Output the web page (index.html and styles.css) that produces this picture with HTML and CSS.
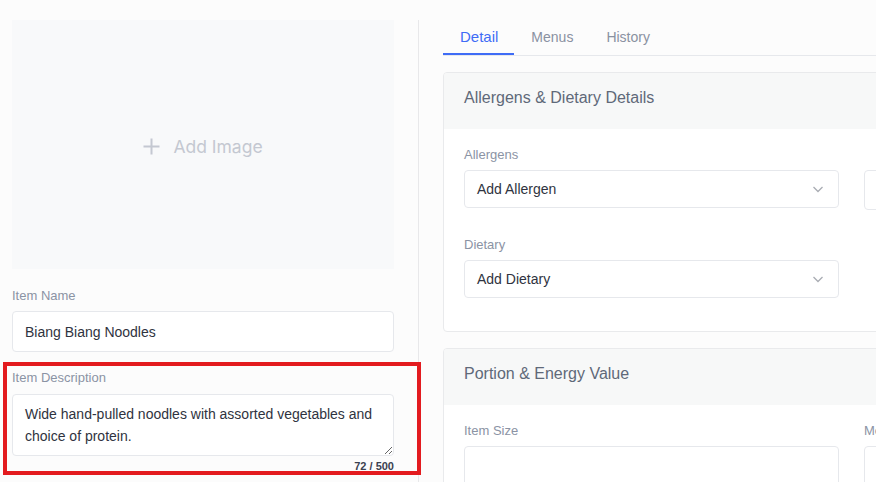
FILE: index.html
```html
<!DOCTYPE html>
<html lang="en">
<head>
<meta charset="utf-8">
<title>Item Detail</title>
<link rel="stylesheet" href="styles.css">
</head>
<body>
<div class="page">
  <aside class="left">
    <div class="image-box">
      <svg class="plus" width="17" height="17" viewBox="0 0 17 17"><path d="M8.5 0.5v16M0.5 8.5h16" stroke="#c4c8d1" stroke-width="2" fill="none"/></svg>
      <span class="add-image">Add Image</span>
    </div>

    <div class="field name-field">
      <label class="label">Item Name</label>
      <div class="input">Biang Biang Noodles</div>
    </div>

    <div class="field desc-field">
      <label class="label">Item Description</label>
      <textarea class="textarea" readonly>Wide hand-pulled noodles with assorted vegetables and choice of protein.</textarea>
      <div class="counter">72 / 500</div>
      <div class="highlight"></div>
    </div>
  </aside>

  <main class="right">
    <nav class="tabs">
      <div class="tab active">Detail</div>
      <div class="tab">Menus</div>
      <div class="tab">History</div>
    </nav>

    <section class="card">
      <div class="card-header">Allergens &amp; Dietary Details</div>
      <div class="card-body">
        <div class="col">
          <div class="field">
            <label class="label">Allergens</label>
            <div class="select"><span>Add Allergen</span>
              <svg width="12" height="12" viewBox="0 0 12 12"><polyline points="1.5,4 6,8.5 10.5,4" fill="none" stroke="#a9acb3" stroke-width="1.3"/></svg>
            </div>
          </div>
          <div class="field second">
            <label class="label">Dietary</label>
            <div class="select"><span>Add Dietary</span>
              <svg width="12" height="12" viewBox="0 0 12 12"><polyline points="1.5,4 6,8.5 10.5,4" fill="none" stroke="#a9acb3" stroke-width="1.3"/></svg>
            </div>
          </div>
        </div>
        <div class="col">
          <div class="field offset">
            <div class="box"></div>
          </div>
        </div>
      </div>
    </section>

    <section class="card">
      <div class="card-header">Portion &amp; Energy Value</div>
      <div class="card-body">
        <div class="col">
          <div class="field">
            <label class="label">Item Size</label>
            <div class="box tall"></div>
          </div>
        </div>
        <div class="col">
          <div class="field">
            <label class="label">Measurement</label>
            <div class="box tall"></div>
          </div>
        </div>
      </div>
    </section>
  </main>
</div>
</body>
</html>
```

FILE: styles.css
```css
html, body {
  margin: 0;
  padding: 0;
  height: 100%;
  overflow: hidden;
  background: #fcfcfc;
  font-family: "Liberation Sans", Arial, sans-serif;
}

.page {
  display: flex;
  align-items: flex-start;
  width: 1300px;
}

.left {
  flex: 0 0 382px;
  margin-top: 20px;
  padding: 0 24px 40px 12px;
  border-right: 1px solid #e8e8ea;
  min-height: 470px;
}

.image-box {
  height: 249px;
  box-sizing: border-box;
  padding-top: 4px;
  background: #f8f9fa;
  display: flex;
  align-items: center;
  justify-content: center;
  gap: 13px;
}

.plus {
  display: block;
}

.add-image {
  font-family: Inter, "Liberation Sans", sans-serif;
  font-size: 17.5px;
  color: #c4c8d1;
  line-height: 22px;
}

.field {
  display: flex;
  flex-direction: column;
}

.label {
  font-size: 13px;
  line-height: 16px;
  color: #8b93a4;
  margin-bottom: 7px;
}

.name-field {
  margin-top: 19px;
}

.input {
  height: 39px;
  border: 1px solid #e6e8ec;
  border-radius: 4px;
  background: #fff;
  padding: 0 12px;
  display: flex;
  align-items: center;
  font-size: 14px;
  color: #2f3340;
}

.desc-field {
  margin-top: 18px;
  position: relative;
}

.textarea {
  display: block;
  box-sizing: border-box;
  width: 100%;
  height: 62px;
  margin: 1px 0 0 0;
  border: 1px solid #e6e8ec;
  border-radius: 4px;
  background: #fff;
  padding: 9px 12px 0 12px;
  font-family: "Liberation Sans", Arial, sans-serif;
  font-size: 14px;
  line-height: 21.5px;
  color: #2f3340;
  resize: vertical;
  outline: none;
}

.counter {
  text-align: right;
  font-size: 11px;
  font-weight: bold;
  line-height: 14px;
  margin-top: 3px;
  color: #3b4150;
}

.highlight {
  position: absolute;
  left: -9px;
  top: -8px;
  width: 410px;
  height: 105px;
  border: 4px solid #e31b1f;
  pointer-events: none;
}

.right {
  flex: 0 0 auto;
  width: 817px;
  margin-top: 20px;
  padding-left: 24px;
}

.tabs {
  display: flex;
  border-bottom: 1px solid #e6e8ec;
}

.tab {
  padding: 7px 16px 6px 17px;
  line-height: 20px;
  font-size: 14px;
  color: #8a91a1;
  border-bottom: 2px solid transparent;
}

.tab.active {
  font-size: 15px;
  color: #3f6cf6;
  border-bottom-color: #3f6cf6;
  padding-right: 16px;
}

.card {
  margin-top: 16px;
  border: 1px solid #e9eaec;
  border-radius: 4px;
  background: #fff;
  overflow: hidden;
}

.card-header {
  height: 56px;
  box-sizing: border-box;
  background: #f7f8f8;
  padding: 0 20px 6px 20px;
  display: flex;
  align-items: center;
  font-size: 16px;
  color: #5f6979;
}

.card-body {
  display: grid;
  grid-template-columns: 375px 375px;
  column-gap: 25px;
  padding: 18px 20px 33px 20px;
}

.col {
  display: flex;
  flex-direction: column;
}

.field.second {
  margin-top: 29px;
}

.field.offset {
  padding-top: 23px;
}

.select {
  height: 36px;
  border: 1px solid #e6e8ec;
  border-radius: 4px;
  background: #fff;
  padding: 0 14px 0 12px;
  display: flex;
  align-items: center;
  justify-content: space-between;
  font-size: 14px;
  color: #2f3340;
}

.select svg {
  display: block;
}

.box {
  height: 38px;
  border: 1px solid #e6e8ec;
  border-radius: 4px;
  background: #fff;
}

.box.tall {
  height: 40px;
}
```
